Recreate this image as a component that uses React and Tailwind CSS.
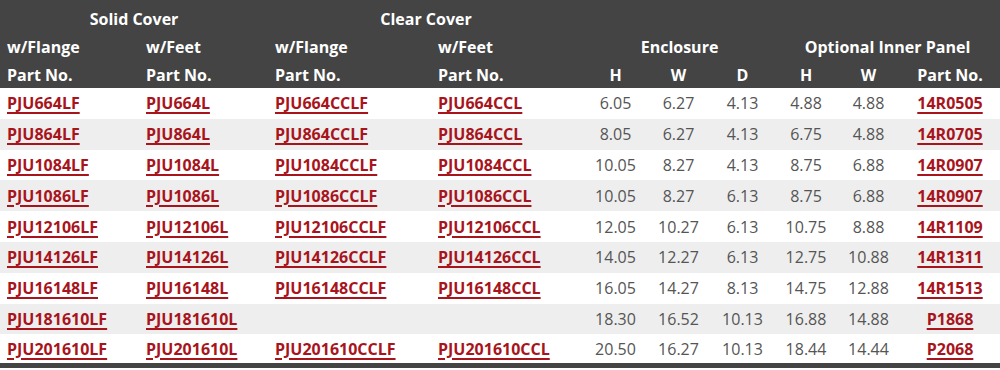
import React from 'react';

const rows = [
  ['PJU664LF', 'PJU664L', 'PJU664CCLF', 'PJU664CCL', '6.05', '6.27', '4.13', '4.88', '4.88', '14R0505'],
  ['PJU864LF', 'PJU864L', 'PJU864CCLF', 'PJU864CCL', '8.05', '6.27', '4.13', '6.75', '4.88', '14R0705'],
  ['PJU1084LF', 'PJU1084L', 'PJU1084CCLF', 'PJU1084CCL', '10.05', '8.27', '4.13', '8.75', '6.88', '14R0907'],
  ['PJU1086LF', 'PJU1086L', 'PJU1086CCLF', 'PJU1086CCL', '10.05', '8.27', '6.13', '8.75', '6.88', '14R0907'],
  ['PJU12106LF', 'PJU12106L', 'PJU12106CCLF', 'PJU12106CCL', '12.05', '10.27', '6.13', '10.75', '8.88', '14R1109'],
  ['PJU14126LF', 'PJU14126L', 'PJU14126CCLF', 'PJU14126CCL', '14.05', '12.27', '6.13', '12.75', '10.88', '14R1311'],
  ['PJU16148LF', 'PJU16148L', 'PJU16148CCLF', 'PJU16148CCL', '16.05', '14.27', '8.13', '14.75', '12.88', '14R1513'],
  ['PJU181610LF', 'PJU181610L', '', '', '18.30', '16.52', '10.13', '16.88', '14.88', 'P1868'],
  ['PJU201610LF', 'PJU201610L', 'PJU201610CCLF', 'PJU201610CCL', '20.50', '16.27', '10.13', '18.44', '14.44', 'P2068'],
];

const widths = ['w-[139px]', 'w-[129px]', 'w-[163px]', 'w-[153px]', 'w-[63px]', 'w-[63px]', 'w-[65px]', 'w-[62px]', 'w-[63px]', 'w-[100px]'];

const PartLink = ({ children }) => (
  <a href="#" className="font-bold text-[#a8141c] underline decoration-2 underline-offset-[3px]">
    {children}
  </a>
);

export default function App() {
  return (
    <div className="w-[1000px] h-[370px] bg-white overflow-hidden font-['Open_Sans',sans-serif] text-[16px]">
      <table className="w-[1000px] table-fixed border-collapse border-b-[5px] border-[#444]">
        <colgroup>
          {widths.map((w, i) => (
            <col key={i} className={w} />
          ))}
        </colgroup>
        <thead className="bg-[#444] text-white font-bold">
          <tr>
            <th colSpan={2} className="h-[33px] p-0 pt-[4px] text-center">Solid Cover</th>
            <th colSpan={2} className="h-[33px] p-0 pt-[4px] text-center">Clear Cover</th>
            <th colSpan={6} className="h-[33px] p-0"></th>
          </tr>
          <tr>
            <th className="h-[28px] p-0 text-left px-[7px]">w/Flange</th>
            <th className="h-[28px] p-0 text-left px-[7px]">w/Feet</th>
            <th className="h-[28px] p-0 text-left px-[7px]">w/Flange</th>
            <th className="h-[28px] p-0 text-left px-[7px]">w/Feet</th>
            <th colSpan={3} className="h-[28px] p-0 text-center">Enclosure</th>
            <th colSpan={3} className="h-[28px] p-0 text-center">Optional Inner Panel</th>
          </tr>
          <tr>
            <th className="h-[27px] p-0 text-left px-[7px]">Part No.</th>
            <th className="h-[27px] p-0 text-left px-[7px]">Part No.</th>
            <th className="h-[27px] p-0 text-left px-[7px]">Part No.</th>
            <th className="h-[27px] p-0 text-left px-[7px]">Part No.</th>
            <th className="h-[27px] p-0 text-center">H</th>
            <th className="h-[27px] p-0 text-center">W</th>
            <th className="h-[27px] p-0 text-center">D</th>
            <th className="h-[27px] p-0 text-center">H</th>
            <th className="h-[27px] p-0 text-center">W</th>
            <th className="h-[27px] p-0 text-center">Part No.</th>
          </tr>
        </thead>
        <tbody>
          {rows.map((r, i) => (
            <tr key={i} className={i % 2 === 1 ? 'bg-[#eeeeee]' : 'bg-white'}>
              {r.map((c, j) => (
                <td
                  key={j}
                  className={
                    j < 4
                      ? 'h-[30.8px] p-0 px-[7px] text-left whitespace-nowrap'
                      : 'h-[30.8px] p-0 text-center text-[#555] whitespace-nowrap'
                  }
                >
                  {j < 4 || j === 9 ? (c ? <PartLink>{c}</PartLink> : null) : c}
                </td>
              ))}
            </tr>
          ))}
        </tbody>
      </table>
    </div>
  );
}
